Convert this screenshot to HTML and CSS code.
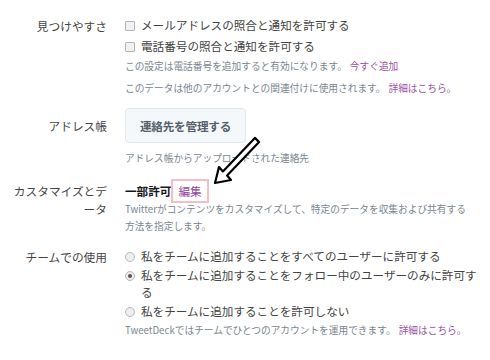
FILE: index.html
```html
<!DOCTYPE html>
<html lang="ja">
<head>
    <meta charset="UTF-8">
    <title>プライバシーとセキュリティ</title>
    <link rel="stylesheet" href="styles.css">
</head>
<body>
    <div class="settings">
        <div class="row row-discover">
            <div class="label">見つけやすさ</div>
            <div class="control">
                <label class="option"><span class="checkbox"></span>メールアドレスの照合と通知を許可する</label>
                <label class="option"><span class="checkbox"></span>電話番号の照合と通知を許可する</label>
                <p class="help">この設定は電話番号を追加すると有効になります。<a href="#">今すぐ追加</a></p>
                <p class="help help-spaced">このデータは他のアカウントとの関連付けに使用されます。<a href="#">詳細はこちら。</a></p>
            </div>
        </div>

        <div class="row row-contacts">
            <div class="label label-button">アドレス帳</div>
            <div class="control">
                <button class="btn">連絡先を管理する</button>
                <p class="help help-after-btn">アドレス帳からアップロードされた連絡先</p>
            </div>
        </div>

        <div class="row row-personal">
            <div class="label label-wrap">カスタマイズとデータ</div>
            <div class="control">
                <div class="status"><strong>一部許可</strong><a href="#" class="edit">編集</a></div>
                <p class="help help-tight help-personal">Twitterがコンテンツをカスタマイズして、特定のデータを収集および共有する方法を指定します。</p>
            </div>
            <!-- 注釈の矢印 -->
            <svg class="arrow" width="56" height="56" viewBox="0 0 56 56">
                <path d="M7 49 L11 33 L14.9 37.4 L46.9 3.9 L51.1 8.1 L19.1 41.6 L23 46 Z" fill="#fff" stroke="#000" stroke-width="2.2" stroke-linejoin="round"/>
            </svg>
        </div>

        <div class="row row-team">
            <div class="label">チームでの使用</div>
            <div class="control">
                <label class="option radio-option"><span class="radio"></span><span>私をチームに追加することをすべてのユーザーに許可する</span></label>
                <label class="option radio-option"><span class="radio checked"></span><span>私をチームに追加することをフォロー中のユーザーのみに許可する</span></label>
                <label class="option radio-option"><span class="radio"></span><span>私をチームに追加することを許可しない</span></label>
                <p class="help help-tight">TweetDeckではチームでひとつのアカウントを運用できます。<a href="#">詳細はこちら。</a></p>
            </div>
        </div>

        <div class="row row-next">
            <div class="label">ダイレクトメッセージ</div>
            <div class="control">
                <label class="option"><span class="checkbox"></span>すべてのユーザーからダイレクトメッセージを受け取る</label>
            </div>
        </div>
    </div>
</body>
</html>
```

FILE: styles.css
```css
* {
    margin: 0;
    padding: 0;
    box-sizing: border-box;
}

body {
    font-family: "Noto Sans CJK JP", "Liberation Sans", sans-serif;
    background-color: #fff;
    color: #444;
    overflow: hidden;
}

.settings {
    padding: 15px 0 0 7px;
}

.row {
    position: relative;
    display: grid;
    grid-template-columns: 100px 354px;
    column-gap: 18px;
}

.label {
    text-align: right;
    font-size: 11.7px;
    line-height: 21px;
    color: #444;
}

.label-button {
    line-height: 35px;
}

.label-wrap {
    line-height: 18px;
    padding-top: 1px;
}

.control {
    font-size: 11.6px;
}

.option {
    display: flex;
    align-items: center;
    line-height: 21px;
    color: #444;
}

.checkbox {
    width: 10px;
    height: 10px;
    margin-right: 6px;
    border: 1px solid #b5b5b5;
    border-radius: 1px;
    background: #f1f1f1;
    flex-shrink: 0;
}

.help {
    font-size: 9.7px;
    line-height: 18px;
    color: #7b8690;
}

.help-spaced {
    margin-top: 4px;
}

.help a {
    color: #9a52a8;
    text-decoration: none;
    margin-left: 3px;
}

.btn {
    display: block;
    width: 121px;
    height: 35px;
    background: #f5f8fa;
    border: 1px solid #e3e8ec;
    border-radius: 4px;
    font-family: inherit;
    font-size: 11.6px;
    font-weight: bold;
    color: #55606a;
    letter-spacing: -0.2px;
}

.help-after-btn {
    margin-top: 6px;
}

.row-contacts {
    margin-top: 11px;
}

.row-personal {
    margin-top: 14px;
}

.status {
    line-height: 20px;
}

.status strong {
    color: #14171a;
}

.edit {
    color: #93449c;
    text-decoration: none;
    margin-left: 2px;
    padding: 2px 5px;
    outline: 2px solid #f5bdc8;
}

.help-tight {
    line-height: 17px;
}

.help-personal {
    max-width: 350px;
}

.arrow {
    position: absolute;
    left: 201px;
    top: -47px;
}

.row-team {
    margin-top: 13px;
}

.row-team .label {
    line-height: 17px;
}

.radio-option {
    align-items: flex-start;
    line-height: 17px;
    margin-bottom: 2px;
}

.radio {
    width: 10px;
    height: 10px;
    margin: 3.5px 6px 0 0;
    border: 1px solid #b8b8b8;
    border-radius: 50%;
    background: #eee;
    flex-shrink: 0;
    position: relative;
}

.radio.checked::after {
    content: "";
    position: absolute;
    left: 2px;
    top: 2px;
    width: 4px;
    height: 4px;
    border-radius: 50%;
    background: #555;
}

.row-next {
    margin-top: 26px;
}
```
